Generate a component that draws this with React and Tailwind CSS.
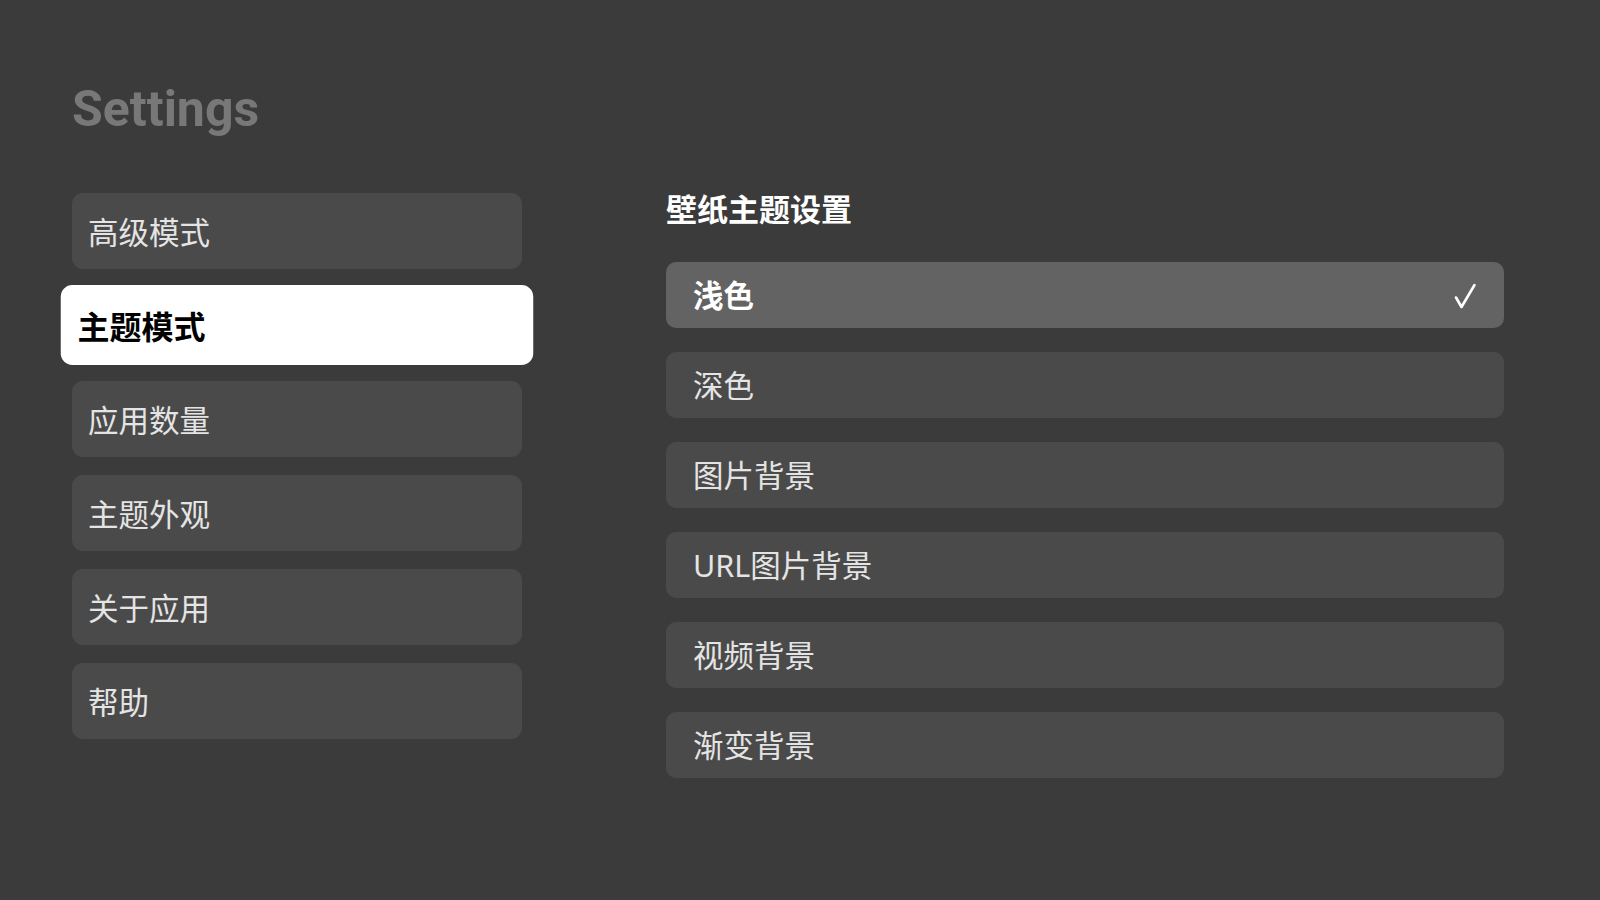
import { useState } from 'react';

const navItems = ['高级模式', '主题模式', '应用数量', '主题外观', '关于应用', '帮助'];
const themeOptions = ['浅色', '深色', '图片背景', 'URL图片背景', '视频背景', '渐变背景'];

const cjk = { fontFamily: '"Noto Sans", "Noto Sans CJK SC", sans-serif' };

function CheckMark() {
  return (
    <svg width="24" height="28" viewBox="0 0 24 28" fill="none">
      <path d="M3 15.5 L8.5 25 L21.5 3" stroke="white" strokeWidth="2.6" strokeLinecap="round" strokeLinejoin="round" />
    </svg>
  );
}

function NavItem({ label, active, onClick }) {
  const cls = active
    ? 'scale-[1.05] bg-white text-black font-bold'
    : 'bg-[#4a4a4a] text-[#e4e4e4]';
  return (
    <button
      onClick={onClick}
      className={`flex h-[76px] w-full items-center rounded-[11px] px-4 pt-[3px] text-left text-[30.5px] ${cls}`}
      style={cjk}
    >
      {label}
    </button>
  );
}

function ThemeOption({ label, active, onClick }) {
  const cls = active ? 'bg-[#636363] text-white font-bold' : 'bg-[#4a4a4a] text-[#e4e4e4]';
  return (
    <button
      onClick={onClick}
      className={`flex h-[66px] w-full items-center justify-between rounded-[10px] pl-[27px] pr-[27px] pt-[2px] text-left text-[30.5px] ${cls}`}
      style={cjk}
    >
      <span>{label}</span>
      {active && <CheckMark />}
    </button>
  );
}

export default function App() {
  const [nav, setNav] = useState(1);
  const [theme, setTheme] = useState(0);

  return (
    <div className="h-[900px] w-full overflow-hidden bg-[#3b3b3b] pl-[72px] pt-[84px]">
      <h1 className="text-[50px] font-bold leading-[50px] text-[#787878]" style={{ fontFamily: 'Roboto, sans-serif' }}>
        Settings
      </h1>

      <div className="mt-[59px] flex gap-[144px]">
        <nav className="flex w-[450px] flex-col gap-[18px]">
          {navItems.map((item, i) => (
            <NavItem key={item} label={item} active={i === nav} onClick={() => setNav(i)} />
          ))}
        </nav>

        <section className="w-[838px]">
          <h2 className="text-[31px] font-bold leading-[32px] text-white" style={cjk}>
            壁纸主题设置
          </h2>
          <div className="mt-[37px] flex flex-col gap-[24px]">
            {themeOptions.map((opt, i) => (
              <ThemeOption key={opt} label={opt} active={i === theme} onClick={() => setTheme(i)} />
            ))}
          </div>
        </section>
      </div>
    </div>
  );
}
